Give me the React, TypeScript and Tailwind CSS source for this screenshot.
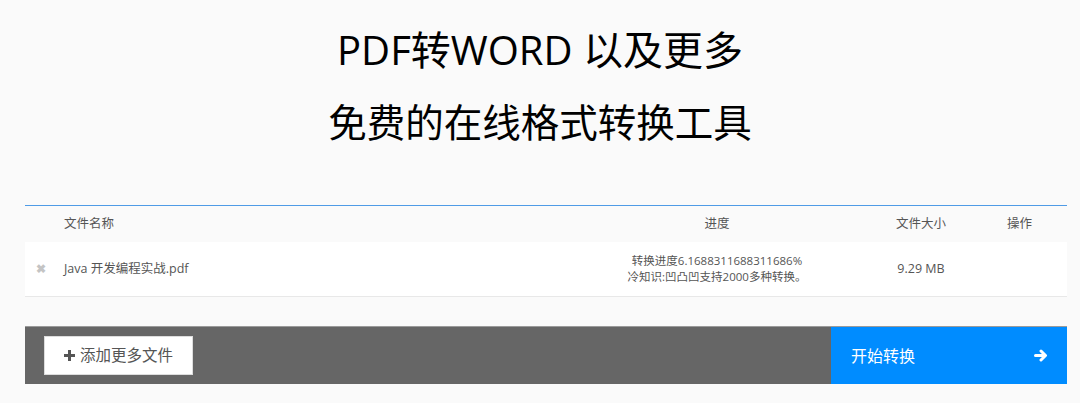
import React from "react";

const FONT = { fontFamily: '"Open Sans", "Noto Sans CJK SC", sans-serif' };

function PlusIcon() {
  return (
    <svg width="11" height="11" viewBox="0 0 11 11" className="shrink-0">
      <rect x="4" y="0" width="3" height="11" fill="#555" />
      <rect x="0" y="4" width="11" height="3" fill="#555" />
    </svg>
  );
}

function ArrowIcon() {
  return (
    <svg width="14" height="13" viewBox="0 0 14 13">
      <path d="M1.5 6.5H11M7 2l4.5 4.5L7 11" stroke="#fff" strokeWidth="3" fill="none" strokeLinecap="round" strokeLinejoin="round" />
    </svg>
  );
}

export default function App() {
  return (
    <div className="w-[1080px] h-[403px] bg-[#fafafa] overflow-hidden" style={FONT}>
      <div className="flex flex-col items-center pt-[22px] text-black">
        <h1 className="text-[40px] leading-[56px] font-normal">PDF转WORD 以及更多</h1>
        <h2 className="text-[38.5px] leading-[56px] font-normal mt-[16px]">免费的在线格式转换工具</h2>
      </div>

      <div className="mx-[25px] mt-[55px] w-[1042px]">
        <div className="border-t border-[#4f9be6]">
          <div className="grid grid-cols-[539px_306px_102px_95px] h-[36px] items-center text-[12.5px] text-[#555]">
            <div className="pl-[39px]">文件名称</div>
            <div className="text-center">进度</div>
            <div className="text-center">文件大小</div>
            <div className="text-center">操作</div>
          </div>
          <div className="grid grid-cols-[539px_306px_102px_95px] h-[55px] items-center bg-white border-b border-[#e8e8e8] text-[#555]">
            <div className="flex items-center">
              <span className="w-[32px] text-center text-[#c4c4c4] text-[12px] font-bold">✖</span>
              <span className="ml-[7px] text-[12.5px]">Java 开发编程实战.pdf</span>
            </div>
            <div className="text-center text-[11.5px] leading-[16px]">
              <div>转换进度6.1688311688311686%</div>
              <div>冷知识:凹凸凹支持2000多种转换。</div>
            </div>
            <div className="text-center text-[12.5px]">9.29 MB</div>
            <div></div>
          </div>
        </div>

        <div className="mt-[29px] h-[58px] flex border-t border-[#9a9a9a]">
          <div className="flex-1 bg-[#666] flex items-center pl-[19px]">
            <button className="h-[39px] w-[149px] bg-white border border-[#ddd] flex items-center justify-center gap-[5px] text-[15.5px] text-[#555]">
              <PlusIcon />
              <span>添加更多文件</span>
            </button>
          </div>
          <div className="w-[236px] bg-[#008cff] flex items-center justify-between pl-[20px] pr-[19px] text-white text-[16px]">
            <span>开始转换</span>
            <ArrowIcon />
          </div>
        </div>
      </div>
    </div>
  );
}
